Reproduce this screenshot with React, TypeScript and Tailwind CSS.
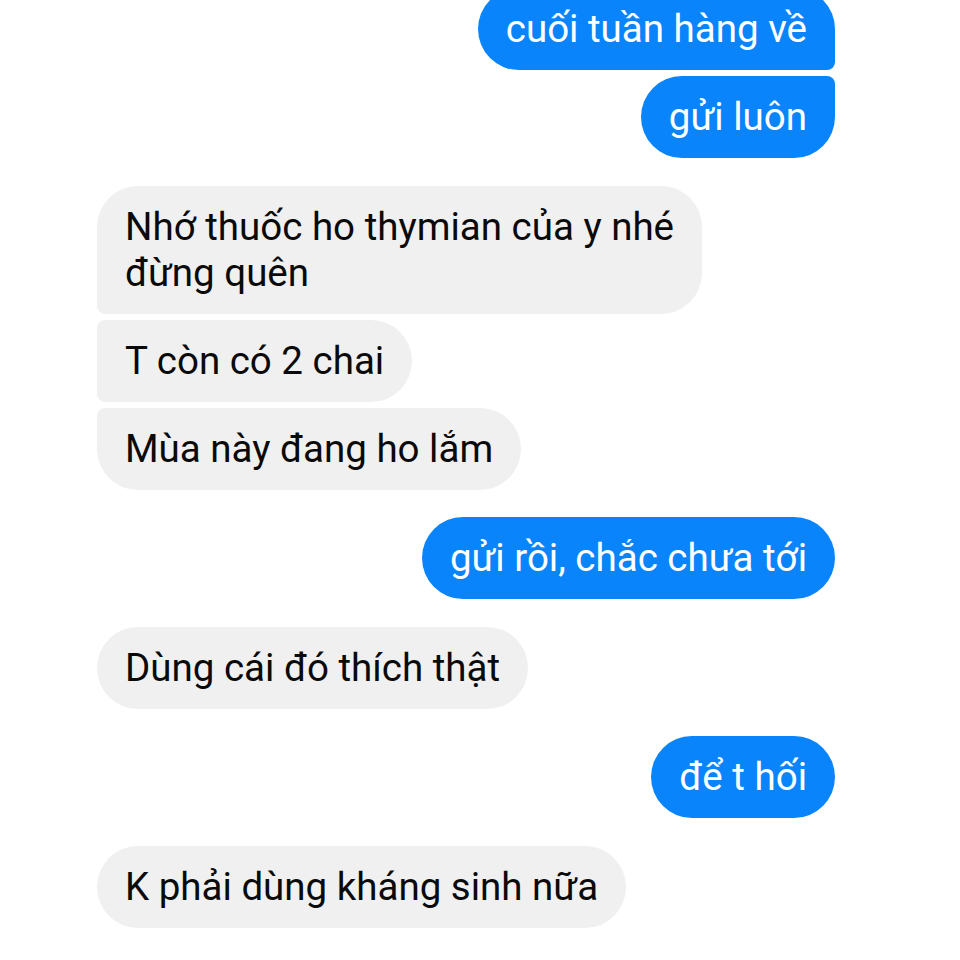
import React from 'react';

type Msg = { text: string[]; radius: string };

const groups: { mine: boolean; msgs: Msg[] }[] = [
  {
    mine: true,
    msgs: [
      { text: ['cuối tuần hàng về'], radius: 'rounded-l-[41px] rounded-tr-[41px] rounded-br-[8px]' },
      { text: ['gửi luôn'], radius: 'rounded-l-[41px] rounded-tr-[8px] rounded-br-[41px]' },
    ],
  },
  {
    mine: false,
    msgs: [
      {
        text: ['Nhớ thuốc ho thymian của y nhé', 'đừng quên'],
        radius: 'rounded-r-[41px] rounded-tl-[41px] rounded-bl-[8px]',
      },
      { text: ['T còn có 2 chai'], radius: 'rounded-r-[41px] rounded-l-[8px]' },
      { text: ['Mùa này đang ho lắm'], radius: 'rounded-r-[41px] rounded-tl-[8px] rounded-bl-[41px]' },
    ],
  },
  { mine: true, msgs: [{ text: ['gửi rồi, chắc chưa tới'], radius: 'rounded-[41px]' }] },
  { mine: false, msgs: [{ text: ['Dùng cái đó thích thật'], radius: 'rounded-[41px]' }] },
  { mine: true, msgs: [{ text: ['để t hối'], radius: 'rounded-[41px]' }] },
  { mine: false, msgs: [{ text: ['K phải dùng kháng sinh nữa'], radius: 'rounded-[41px]' }] },
];

const App = () => {
  return (
    <div className="w-[960px] h-[960px] overflow-hidden bg-white font-['Roboto',sans-serif]">
      <div className="-mt-3 flex flex-col gap-[27.5px] pl-[97px] pr-[125px]">
        {groups.map((group, gi) => (
          <div key={gi} className={`flex flex-col gap-[6px] ${group.mine ? 'items-end' : 'items-start'}`}>
            {group.msgs.map((msg, mi) => (
              <div
                key={mi}
                className={`px-[28px] py-[18px] text-[38.5px] leading-[46px] whitespace-nowrap ${msg.radius} ${
                  group.mine ? 'bg-[#0a84fb] text-white' : 'bg-[#f0f0f0] text-[#0a0a0a]'
                }`}
              >
                {msg.text.map((line, li) => (
                  <div key={li}>{line}</div>
                ))}
              </div>
            ))}
          </div>
        ))}
      </div>
    </div>
  );
};

export default App;
